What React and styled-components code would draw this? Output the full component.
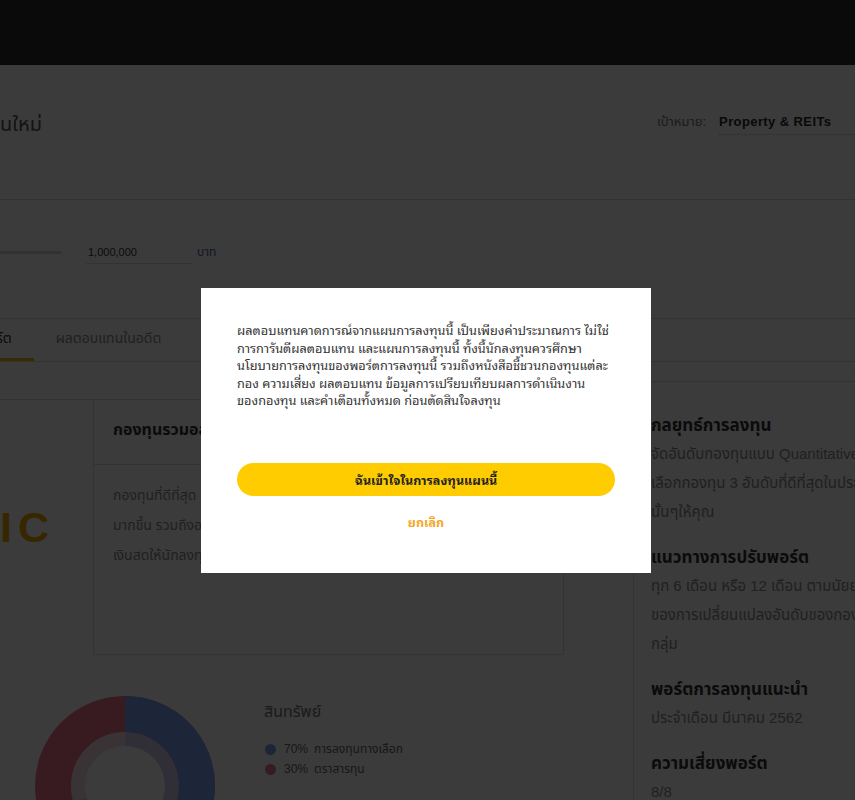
import React from 'react';
import styled, { createGlobalStyle } from 'styled-components';

const GlobalStyle = createGlobalStyle`
  * { box-sizing: border-box; }
  html, body {
    margin: 0;
    padding: 0;
    overflow: hidden;
    background: #fff;
  }
  body {
    font-family: 'Liberation Sans', 'Noto Sans Thai', 'Noto Sans', sans-serif;
    color: #333;
  }
`;

// the page is scrolled sideways, so its left edge sits off screen
const Page = styled.div`
  width: 1200px;
  height: 800px;
  margin-left: -160px;
`;

const TopBar = styled.div`
  height: 65px;
  background: #2b2b2b;
`;

const Header = styled.header`
  height: 135px;
  border-bottom: 1px solid #ddd;
  display: flex;
  align-items: flex-start;
  padding-top: 46px;
`;

const TitleWrap = styled.div`
  width: 202px;
  display: flex;
  justify-content: flex-end;
`;

const Title = styled.h1`
  margin: 0;
  white-space: nowrap;
  font-size: 20px;
  line-height: 26px;
  font-weight: 400;
  color: #555;
`;

const Goal = styled.div`
  margin-left: 615px;
  margin-top: -3px;
  display: flex;
  align-items: center;
  line-height: 22px;
  font-size: 13px;
  color: #777;
  span {
    margin-left: 13px;
    width: 160px;
    font-weight: 700;
    color: #2a2a2a;
    letter-spacing: 0.4px;
    border-bottom: 1px dotted #bbb;
    padding-bottom: 1px;
    margin-top: 3px;
  }
`;

const Amount = styled.section`
  height: 119px;
  border-bottom: 1px solid #ddd;
  display: flex;
  align-items: center;
  padding-bottom: 14px;
`;

const Track = styled.div`
  width: 222px;
  height: 3px;
  background: #d6d6d6;
  border-radius: 2px;
`;

const AmountInput = styled.div`
  margin-left: 24px;
  width: 107px;
  font-size: 11px;
  line-height: 16px;
  color: #333;
  padding: 0 2px 3px;
  border-bottom: 1px solid #ddd;
  margin-top: 4px;
`;

const Unit = styled.span`
  margin-left: 4px;
  font-size: 12px;
  color: #4a5f90;
`;

const TabRow = styled.nav`
  height: 43px;
  border-bottom: 1px solid #ddd;
  display: flex;
  padding-left: 70px;
`;

const Tab = styled.div`
  padding: 0 22px;
  display: flex;
  align-items: center;
  font-size: 14px;
  color: ${p => (p.$active ? '#333' : '#8a8a8a')};
  border-bottom: 3px solid ${p => (p.$active ? '#f5b400' : 'transparent')};
  white-space: nowrap;
`;

const Main = styled.div`
  display: flex;
  align-items: flex-start;
`;

const LeftCol = styled.div`
  width: 724px;
`;

const Card = styled.div`
  margin-top: 37px;
  border-top: 1px solid #ddd;
  display: flex;
  height: 256px;
`;

const LogoPanel = styled.div`
  width: 253px;
  display: flex;
  align-items: center;
  justify-content: flex-end;
  padding-right: 38px;
  font-family: 'Liberation Sans', sans-serif;
  font-size: 43px;
  font-weight: 700;
  letter-spacing: 6px;
  color: #eea800;
`;

const Detail = styled.div`
  width: 471px;
  border: 1px solid #ddd;
  border-top: none;
`;

const DetailHead = styled.h3`
  margin: 0;
  height: 65px;
  display: flex;
  align-items: center;
  padding: 0 0 4px 19px;
  font-size: 16px;
  font-weight: 700;
  color: #333;
  border-bottom: 1px solid #ddd;
`;

const DetailBody = styled.p`
  margin: 0;
  padding: 15px 19px 0;
  font-size: 14px;
  line-height: 30px;
  color: #8a8a8a;
  white-space: nowrap;
`;

const ChartRow = styled.div`
  display: flex;
  align-items: flex-start;
  padding: 41px 0 0 195px;
`;

const Legend = styled.div`
  margin-left: 49px;
  padding-top: 5px;
`;

const LegendTitle = styled.div`
  font-size: 16px;
  line-height: 22px;
  color: #777;
  margin-bottom: 16px;
`;

const LegendItem = styled.div`
  display: flex;
  align-items: center;
  font-size: 12px;
  line-height: 20px;
  color: #666;
  b {
    font-weight: 400;
    margin: 0 6px 0 8px;
  }
`;

const Dot = styled.i`
  width: 11px;
  height: 11px;
  border-radius: 50%;
  margin-left: 1px;
  background: ${p => p.$color};
`;

const RightCol = styled.aside`
  margin: 19px 0 0 69px;
  width: 410px;
  border-left: 1px solid #ddd;
  border-top: 1px solid #ddd;
  padding: 32px 0 0 17px;
`;

const Block = styled.div`
  margin-bottom: 20px;
`;

const BlockTitle = styled.h4`
  margin: 0 0 1px;
  font-size: 17px;
  line-height: 24px;
  font-weight: 700;
  color: #333;
`;

const BlockText = styled.p`
  margin: 0;
  font-size: 15px;
  line-height: 29px;
  color: #8a8a8a;
  white-space: nowrap;
`;

const Overlay = styled.div`
  position: fixed;
  inset: 0;
  background: rgba(0, 0, 0, 0.77);
  display: flex;
  justify-content: center;
  align-items: flex-start;
`;

const Modal = styled.div`
  margin-top: 288px;
  margin-left: -3px;
  width: 450px;
  height: 285px;
  background: #fff;
  padding: 33px 36px 0;
  display: flex;
  flex-direction: column;
  font-family: 'Noto Sans Thai Looped', 'Liberation Sans', 'Noto Sans Thai', sans-serif;
`;

const Disclaimer = styled.p`
  margin: 0;
  font-size: 12.75px;
  line-height: 17.5px;
  color: #333;
  white-space: nowrap;
`;

const AcceptButton = styled.button`
  margin-top: 54px;
  height: 33px;
  width: 100%;
  border: none;
  border-radius: 17px;
  background: #ffcc00;
  font-family: inherit;
  font-size: 12.5px;
  font-weight: 700;
  color: #222;
`;

const CancelLink = styled.button`
  margin-top: 16px;
  align-self: center;
  border: none;
  background: none;
  padding: 0;
  font-family: inherit;
  font-size: 12.5px;
  line-height: 18px;
  font-weight: 700;
  color: #f5a623;
`;

const Donut = () => {
  const c1 = 2 * Math.PI * 72;
  const c2 = 2 * Math.PI * 47;
  return (
    <svg width="180" height="180" viewBox="0 0 180 180">
      <g transform="rotate(-90 90 90)">
        <circle cx="90" cy="90" r="72" fill="none" stroke="#f07090" strokeWidth="36" />
        <circle cx="90" cy="90" r="72" fill="none" stroke="#7ca4f2" strokeWidth="36"
          strokeDasharray={`${c1 * 0.7} ${c1}`} />
        <circle cx="90" cy="90" r="47" fill="none" stroke="#f07090" strokeWidth="14" opacity="0.25" />
        <circle cx="90" cy="90" r="47" fill="none" stroke="#7ca4f2" strokeWidth="14" opacity="0.35"
          strokeDasharray={`${c2 * 0.7} ${c2}`} />
      </g>
    </svg>
  );
};

const App = () => {
  return (
    <>
      <GlobalStyle />
      <Page>
        <TopBar />
        <Header>
          <TitleWrap>
            <Title>สร้างแผนการลงทุนใหม่</Title>
          </TitleWrap>
          <Goal>
            เป้าหมาย:<span>Property &amp; REITs</span>
          </Goal>
        </Header>
        <Amount>
          <Track />
          <AmountInput>1,000,000</AmountInput>
          <Unit>บาท</Unit>
        </Amount>
        <TabRow>
          <Tab $active>ภาพรวมพอร์ต</Tab>
          <Tab>ผลตอบแทนในอดีต</Tab>
        </TabRow>
        <Main>
          <LeftCol>
            <Card>
              <LogoPanel>BASIC</LogoPanel>
              <Detail>
                <DetailHead>กองทุนรวมอสังหาริมทรัพย์และโครงสร้างพื้นฐาน</DetailHead>
                <DetailBody>
                  กองทุนที่ดีที่สุด ที่ช่วยกระจายความเสี่ยงให้พอร์ตของคุณ<br />
                  มากขึ้น รวมถึงอสังหาริมทรัพย์ที่สร้างกระแส<br />
                  เงินสดให้นักลงทุนอย่างสม่ำเสมอ
                </DetailBody>
              </Detail>
            </Card>
            <ChartRow>
              <Donut />
              <Legend>
                <LegendTitle>สินทรัพย์</LegendTitle>
                <LegendItem>
                  <Dot $color="#7ca4f2" />
                  <b>70%</b>การลงทุนทางเลือก
                </LegendItem>
                <LegendItem>
                  <Dot $color="#f07090" />
                  <b>30%</b>ตราสารทุน
                </LegendItem>
              </Legend>
            </ChartRow>
          </LeftCol>
          <RightCol>
            <Block>
              <BlockTitle>กลยุทธ์การลงทุน</BlockTitle>
              <BlockText>
                จัดอันดับกองทุนแบบ Quantitative Ranking<br />
                เลือกกองทุน 3 อันดับที่ดีที่สุดในประเภท<br />
                นั้นๆให้คุณ
              </BlockText>
            </Block>
            <Block>
              <BlockTitle>แนวทางการปรับพอร์ต</BlockTitle>
              <BlockText>
                ทุก 6 เดือน หรือ 12 เดือน ตามนัยยะสำคัญ<br />
                ของการเปลี่ยนแปลงอันดับของกองทุนในแต่ละ<br />
                กลุ่ม
              </BlockText>
            </Block>
            <Block>
              <BlockTitle>พอร์ตการลงทุนแนะนำ</BlockTitle>
              <BlockText>ประจำเดือน มีนาคม 2562</BlockText>
            </Block>
            <Block>
              <BlockTitle>ความเสี่ยงพอร์ต</BlockTitle>
              <BlockText>8/8</BlockText>
            </Block>
          </RightCol>
        </Main>
      </Page>
      <Overlay>
        <Modal>
          <Disclaimer>
            ผลตอบแทนคาดการณ์จากแผนการลงทุนนี้ เป็นเพียงค่าประมาณการ ไม่ใช่<br />
            การการันตีผลตอบแทน และแผนการลงทุนนี้ ทั้งนี้นักลงทุนควรศึกษา<br />
            นโยบายการลงทุนของพอร์ตการลงทุนนี้ รวมถึงหนังสือชี้ชวนกองทุนแต่ละ<br />
            กอง ความเสี่ยง ผลตอบแทน ข้อมูลการเปรียบเทียบผลการดำเนินงาน<br />
            ของกองทุน และคำเตือนทั้งหมด ก่อนตัดสินใจลงทุน
          </Disclaimer>
          <AcceptButton>ฉันเข้าใจในการลงทุนแผนนี้</AcceptButton>
          <CancelLink>ยกเลิก</CancelLink>
        </Modal>
      </Overlay>
    </>
  );
};

export default App;
